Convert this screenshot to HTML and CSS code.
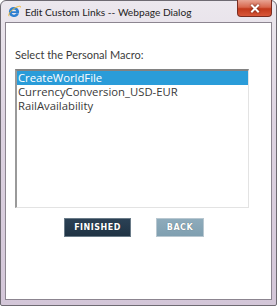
FILE: index.html
```html
<!DOCTYPE html>
<html lang="en">
<head>
  <meta charset="UTF-8">
  <title>Edit Custom Links -- Webpage Dialog</title>
  <link rel="stylesheet" href="styles.css">
</head>
<body>
  <div class="window">
    <!-- Title bar -->
    <div class="titlebar">
      <svg class="ie-icon" viewBox="0 0 16 16">
        <path d="M8 2.2a5.8 5.8 0 1 0 5.6 7.3H10.5a2.8 2.8 0 0 1-5.1-0.3h8.3A5.8 5.8 0 0 0 8 2.2zM5.4 7.1a2.7 2.7 0 0 1 5.2 0z" fill="#2d7fd1"/>
        <path d="M2.3 12.8c-1.2-1.8 1.4-6 5.8-8.8s8.1-3.4 7.4-1.3" fill="none" stroke="#f2b82d" stroke-width="1.1"/>
      </svg>
      <span class="title-text">Edit Custom Links -- Webpage Dialog</span>
      <div class="close-btn">
        <svg class="close-x" viewBox="0 0 10 9">
          <path d="M2 1.5l6 6M8 1.5l-6 6" stroke="#fff" stroke-width="2" stroke-linecap="square"/>
        </svg>
      </div>
    </div>

    <!-- Dialog content -->
    <div class="client">
      <p class="prompt">Select the Personal Macro:</p>
      <div class="listbox">
        <div class="list-item selected">CreateWorldFile</div>
        <div class="list-item">CurrencyConversion_USD-EUR</div>
        <div class="list-item">RailAvailability</div>
      </div>
      <div class="actions">
        <button class="btn btn-dark">FINISHED</button>
        <button class="btn btn-light">BACK</button>
      </div>
    </div>
  </div>
</body>
</html>
```

FILE: styles.css
```css
body {
  margin: 0;
  padding: 0;
  background: #ffffff;
  font-family: 'Open Sans', 'Noto Sans', sans-serif;
}

/* Window frame */
.window {
  width: 277px;
  height: 306px;
  box-sizing: border-box;
  border: 1px solid #6e6a72;
  border-radius: 6px 6px 2px 2px;
  background: linear-gradient(180deg, #ece8ee 0%, #ddd3e1 40%, #d3c6d8 100%);
  padding: 0 4px 5px 4px;
  display: flex;
  flex-direction: column;
}

.titlebar {
  height: 21px;
  display: flex;
  align-items: center;
  position: relative;
}

.ie-icon {
  width: 14px;
  height: 14px;
  margin-left: 2px;
  margin-right: 4px;
}

.title-text {
  font-family: Lato, sans-serif;
  font-size: 10.2px;
  color: #1e1e1e;
}

.close-btn {
  position: absolute;
  top: -1px;
  right: 0;
  width: 35px;
  height: 17px;
  box-sizing: border-box;
  border: 1px solid #7a2c20;
  border-top: none;
  border-radius: 0 0 4px 4px;
  background: linear-gradient(180deg, #e8a493 0%, #d8674d 45%, #c2391b 55%, #d8573a 100%);
  display: flex;
  align-items: center;
  justify-content: center;
}

.close-x {
  width: 10px;
  height: 9px;
  filter: drop-shadow(0 0 1px #5a1a10);
}

/* Client area */
.client {
  flex: 1;
  background: #ffffff;
  border: 1px solid #8c8590;
  padding: 0 22px 0 9px;
}

.prompt {
  margin: 24px 0 7px 0;
  font-family: Lato, sans-serif;
  font-size: 11px;
  line-height: 15px;
  color: #3c3c3c;
}

.listbox {
  height: 139px;
  box-sizing: border-box;
  border: 1px solid #e3e3e3;
  border-top: 2px solid #828282;
  border-left: 2px solid #9a9a9a;
  padding: 0;
}

.list-item {
  height: 14px;
  line-height: 14px;
  font-size: 11.3px;
  color: #3a3a3a;
  padding-left: 1px;
  white-space: nowrap;
}

.list-item.selected {
  background: #2a9cd9;
  color: #ffffff;
}

.actions {
  display: flex;
  justify-content: center;
  gap: 25px;
  margin-top: 10px;
  padding-left: 4px;
}

.btn {
  height: 19px;
  border: none;
  padding: 0;
  font-family: 'DejaVu Sans', sans-serif;
  font-size: 8px;
  font-weight: 700;
  letter-spacing: 0.5px;
  color: #ffffff;
  text-shadow: 0 0 1px rgba(0, 0, 0, 0.4);
}

.btn-dark {
  width: 67px;
  background: linear-gradient(180deg, #2b4155 0%, #1f3344 100%);
  border: 1px solid #6a7b88;
}

.btn-light {
  width: 48px;
  background: linear-gradient(180deg, #8eabbb 0%, #7f9fb0 100%);
  border: 1px solid #b8c7d0;
}
```
